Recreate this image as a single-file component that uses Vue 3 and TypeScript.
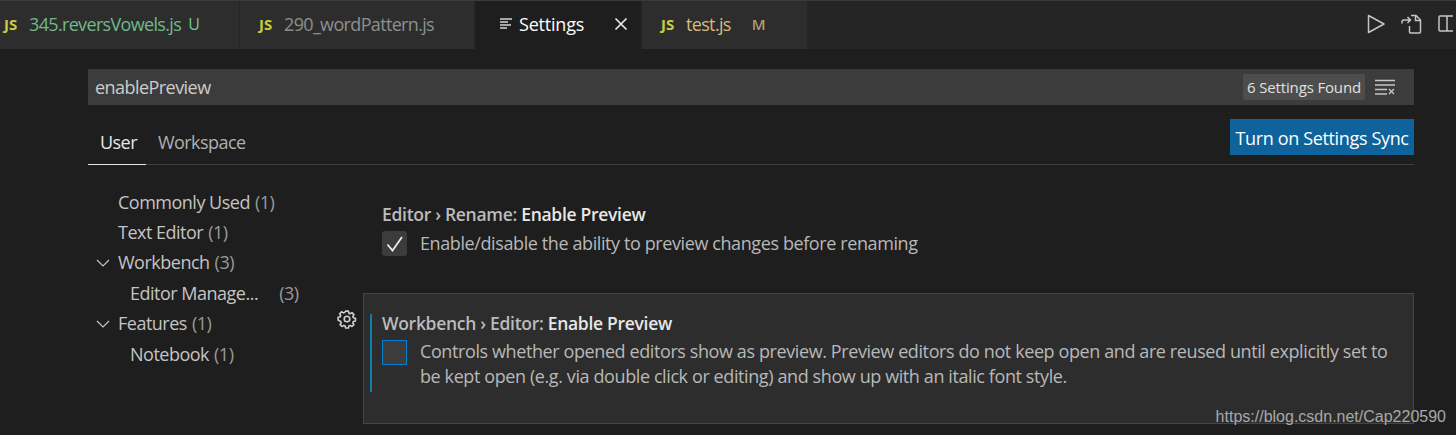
<script setup lang="ts">
interface Tab { name: string; cls: string; badge: string; width: number; }
const tabs: Tab[] = [
  { name: '345.reversVowels.js', cls: 'untracked', badge: 'U', width: 240 },
  { name: '290_wordPattern.js', cls: 'plain', badge: '', width: 235 },
];
interface Node { label: string; count: string; level: number; open?: boolean; gap?: boolean; }
const tree: Node[] = [
  { label: 'Commonly Used', count: '(1)', level: 0 },
  { label: 'Text Editor', count: '(1)', level: 0 },
  { label: 'Workbench', count: '(3)', level: 0, open: true },
  { label: 'Editor Manage...', count: '(3)', level: 1, gap: true },
  { label: 'Features', count: '(1)', level: 0, open: true },
  { label: 'Notebook', count: '(1)', level: 1 },
];
</script>

<template>
  <div class="app">
    <header class="tabbar">
      <div v-for="t in tabs" :key="t.name" class="tab" :class="t.cls" :style="{ width: t.width + 'px' }">
        <span class="js">JS</span>
        <span class="tname">{{ t.name }}</span>
        <span v-if="t.badge" class="badge">{{ t.badge }}</span>
      </div>
      <div class="tab active">
        <svg class="lines" width="14" height="14" viewBox="0 0 14 14"><path d="M1 2h12M1 5h8M1 8h11M1 11h7" stroke="#d4d4d4" stroke-width="1.4" fill="none"/></svg>
        <span class="tname">Settings</span>
        <svg class="close" width="14" height="14" viewBox="0 0 14 14"><path d="M1.500 1.500l11 11M12.500 1.500l-11 11" stroke="#eee" stroke-width="1.600" fill="none"/></svg>
      </div>
      <div class="tab modified">
        <span class="js">JS</span>
        <span class="tname">test.js</span>
        <span class="badge">M</span>
      </div>
      <div class="actions">
        <svg width="20" height="20" viewBox="0 0 20 20"><path d="M2.500 1.500v17l15.500-8.500z" fill="none" stroke="#c5c5c5" stroke-width="1.500" stroke-linejoin="round"/></svg>
        <svg width="22" height="20" viewBox="0 0 22 20"><path d="M11 1.500h5l4.500 4.500v12a1 1 0 0 1-1 1h-9a1 1 0 0 1-1-1v-6M15.500 1.500v5h5M2 9.500V8a2 2 0 0 1 2-2h6M7.500 3l3 3-3 3" fill="none" stroke="#c5c5c5" stroke-width="1.500"/></svg>
        <svg class="split" width="15" height="20" viewBox="0 0 15 20"><path d="M2 2h20v15H2a1 1 0 0 1-1-1V3a1 1 0 0 1 1-1zM9 2v15" fill="none" stroke="#c5c5c5" stroke-width="1.500"/></svg>
      </div>
    </header>

    <main class="editor">
      <div class="search">
        <span class="query">enablePreview</span>
        <span class="found">6 Settings Found</span>
        <svg class="clear" width="22" height="16" viewBox="0 0 22 16"><path d="M1 1.500h20M1 6h20M1 10.500h12M1 15h12" stroke="#c5c5c5" stroke-width="1.400" fill="none"/><path d="M15 10l5 5M20 10l-5 5" stroke="#c5c5c5" stroke-width="1.400" fill="none"/></svg>
      </div>

      <div class="scope">
        <span class="scope-tab on">User</span>
        <span class="scope-tab">Workspace</span>
        <button class="sync" type="button">Turn on Settings Sync</button>
      </div>

      <div class="content">
        <nav class="tree">
          <div v-for="n in tree" :key="n.label" class="node" :class="'lv' + n.level">
            <svg v-if="n.open" class="chev" width="14" height="8" viewBox="0 0 14 8"><path d="M1 1l6 6 6-6" fill="none" stroke="#c5c5c5" stroke-width="1.200"/></svg>
            <span class="label">{{ n.label }}</span>
            <span class="count" :class="{ gap: n.gap }">{{ n.count }}</span>
          </div>
        </nav>

        <section class="settings">
          <article class="setting first">
            <div class="title">Editor › Rename: <b>Enable Preview</b></div>
            <div class="row">
              <span class="box checked">
                <svg width="20" height="20" viewBox="0 0 20 20"><path d="M2.500 10.500l5 6L17 3" fill="none" stroke="#f0f0f0" stroke-width="1.700"/></svg>
              </span>
              <p class="desc single">Enable/disable the ability to preview changes before renaming</p>
            </div>
          </article>

          <article class="setting focused">
            <svg class="gear" width="20" height="20" viewBox="0 0 20 20">
              <path d="M8.400 1.500h3.200l.5 2.400 1.400.6 2.100-1.300 2.200 2.200-1.300 2.100.6 1.400 2.400.5v3.200l-2.400.5-.6 1.400 1.300 2.100-2.200 2.200-2.100-1.300-1.400.6-.5 2.400H8.400l-.5-2.400-1.400-.6-2.100 1.300-2.200-2.200 1.300-2.100-.6-1.400L0 11.600V8.400l2.400-.5.6-1.400L1.700 4.400l2.200-2.200L6 3.500l1.400-.6z" transform="translate(1.100 .8) scale(.89)" fill="none" stroke="#d0d0d0" stroke-width="1.800" stroke-linejoin="round"/>
              <circle cx="10" cy="10" r="2.800" fill="none" stroke="#d0d0d0" stroke-width="1.600"/>
            </svg>
            <div class="inner">
              <div class="title">Workbench › Editor: <b>Enable Preview</b></div>
              <div class="row">
                <span class="box active"></span>
                <p class="desc">Controls whether opened editors show as preview. Preview editors do not keep open and are reused until explicitly set to be kept open (e.g. via double click or editing) and show up with an italic font style.</p>
              </div>
            </div>
          </article>
        </section>
      </div>
    </main>
    <span class="mark">https://blog.csdn.net/Cap220590</span>
  </div>
</template>

<style>
html, body { margin: 0; background: #1e1e1e; overflow: hidden; }
</style>

<style scoped>
.app {
  position: relative;
  width: 1456px;
  height: 435px;
  overflow: hidden;
  background: #1e1e1e;
  color: #cccccc;
  font-family: "Open Sans", "Noto Sans", sans-serif;
  font-size: 18px;
  letter-spacing: -0.5px;
}
.tabbar {
  display: flex;
  height: 48px;
  border-top: 1px solid #3a3a3a;
  background: #252526;
}
.tab {
  display: flex;
  align-items: center;
  height: 48px;
  box-sizing: border-box;
  background: #2d2d2d;
  border-right: 1px solid #252526;
  padding-bottom: 3px;
  flex-shrink: 0;
}
.js {
  color: #cbcb41;
  font-size: 15px;
  font-weight: 700;
  width: 15px;
  margin-left: 4px;
  margin-right: 10px;
  letter-spacing: 0;
}
.plain .js { margin-left: 19px; }
.tname { font-size: 18px; letter-spacing: -0.66px; }
.untracked .badge { color: #73c991; }
.untracked .tname { color: #6fb98a; }
.badge { margin-left: 7px; font-size: 16px; letter-spacing: 0; }
.plain .tname { color: #8f8f8f; }
.active {
  width: 167px;
  background: #1e1e1e;
  color: #fff;
}
.active .tname { letter-spacing: -0.2px; }
.lines { margin-left: 24px; margin-right: 6px; }
.close { margin-left: 30px; }
.modified { width: 166px; }
.modified .js { margin-left: 19px; }
.modified .tname { color: #d7ba7d; }
.modified .badge { color: #b39a6a; margin-left: 21px; font-weight: 600; font-size: 15px; }
.actions {
  margin-left: auto;
  display: flex;
  align-items: center;
  gap: 14px;
  padding: 0 0 2px 0;
  width: 90px;
  overflow: hidden;
  flex-shrink: 0;
}
.split { margin-left: 2px; flex-shrink: 0; }

.editor { padding: 20px 42px 0 88px; }
.search {
  display: flex;
  align-items: center;
  height: 36px;
  background: #3c3c3c;
  padding: 0 18px 0 7px;
}
.query { flex: 1; color: #cccccc; font-size: 18px; letter-spacing: -0.55px; }
.found {
  background: #4d4d4d;
  color: #e0e0e0;
  font-size: 15px;
  line-height: 26px;
  padding: 0 4px;
  border-radius: 2px;
  letter-spacing: -0.15px;
  margin-right: 9px;
}
.clear { display: block; }
.scope {
  display: flex;
  align-items: stretch;
  height: 59px;
  border-bottom: 1px solid #3f3f3f;
  position: relative;
}
.scope-tab {
  padding: 25px 11px 0 12px;
  color: #b0b0b0;
  font-size: 18px;
  margin-bottom: -1px;
  letter-spacing: -0.55px;
}
.scope-tab.on {
  color: #e7e7e7;
  border-bottom: 1px solid #e7e7e7;
  padding-right: 9px;
}
.sync {
  margin: 14px 0 9px auto;
  height: 36px;
  width: 184px;
  border: 0;
  padding: 2px 0 0;
  background: #0e639c;
  color: #fff;
  font-family: inherit;
  font-size: 18px;
  letter-spacing: -0.35px;
}
.content { display: flex; }
.tree {
  width: 275px;
  flex-shrink: 0;
  padding-top: 21.700px;
}
.node {
  position: relative;
  height: 30.400px;
  line-height: 30.400px;
  white-space: nowrap;
  color: #c4c4c4;
  font-size: 18px;
}
.lv0 { padding-left: 30px; }
.lv1 { padding-left: 42px; }
.chev { position: absolute; left: 8px; top: 12px; }
.count { color: #9a9a9a; margin-left: 5px; }
.count.gap { margin-left: 21px; }
.settings { flex: 1; min-width: 0; }
.setting.first { padding: 38px 0 0 19px; height: 90px; }
.title { color: #bbbbbb; font-weight: 600; font-size: 17.500px; line-height: 22px; letter-spacing: -0.300px; }
.title b { color: #e7e7e7; font-weight: 600; }
.row { display: flex; align-items: flex-start; margin-top: 6px; }
.box {
  flex-shrink: 0;
  width: 25px;
  height: 25px;
  box-sizing: border-box;
  background: #3c3c3c;
  border-radius: 3px;
  display: flex;
  align-items: center;
  justify-content: center;
  margin-right: 13px;
}
.box.active { border: 1px solid #007fd4; border-radius: 0; }
.desc {
  margin: -1px 0 0 0;
  font-size: 18px;
  line-height: 25px;
  color: #b8b8b8;
  letter-spacing: -0.400px;
}
.single { margin-top: 0; }
.focused {
  position: relative;
  box-sizing: border-box;
  height: 131px;
  background: #2d2d2d;
  border: 1px solid #454545;
  padding: 20px 20px 0 6px;
}
.focused .title { margin-top: -2px; }
.gear { position: absolute; left: -27px; top: 15px; }
.inner {
  display: flow-root;
  border-left: 2px solid #0e7eaa;
  height: 78px;
  padding-left: 10px;
  box-sizing: border-box;
}
.mark {
  position: absolute;
  right: 10px;
  bottom: 9px;
  font-family: "Liberation Sans", Arial, sans-serif;
  font-size: 16px;
  color: #a8a8a8;
  letter-spacing: 0;
}
</style>
